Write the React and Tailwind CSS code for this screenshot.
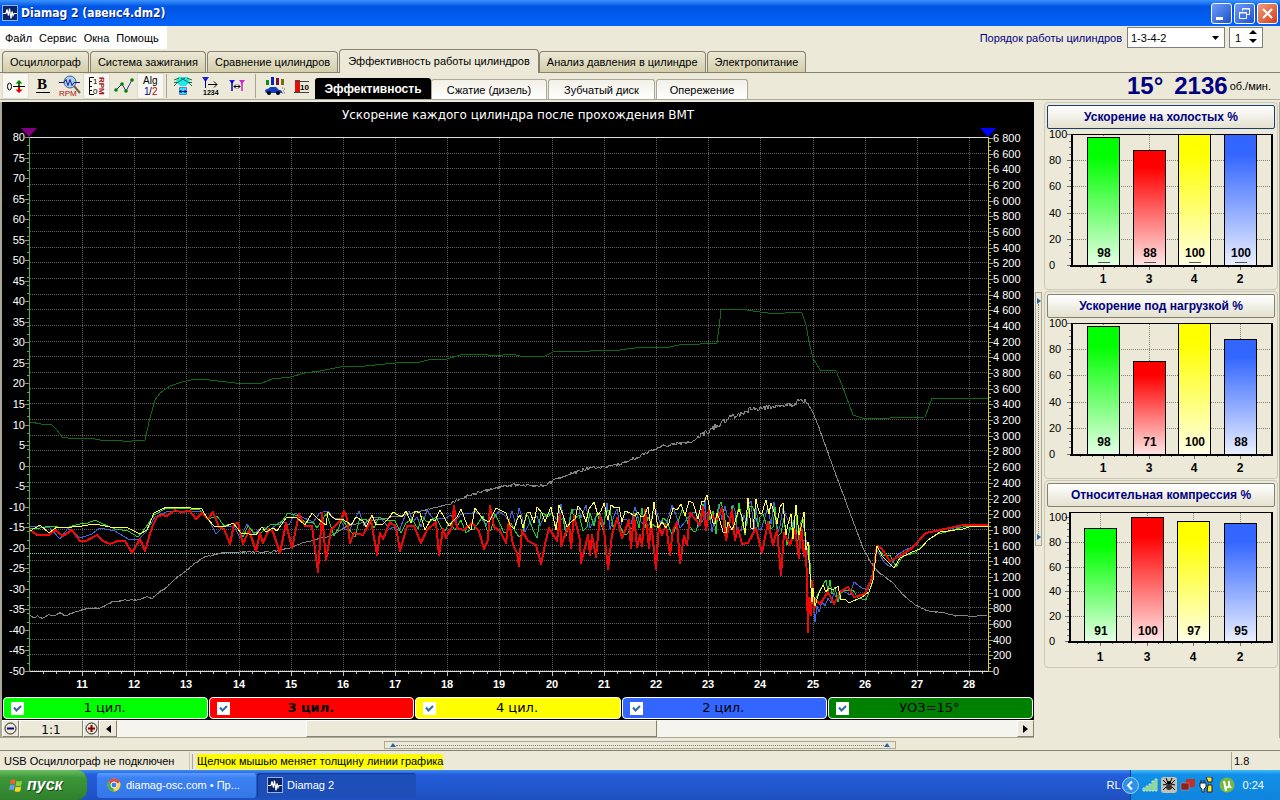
import { useState } from "react";

const TABS = [
  "Осциллограф",
  "Система зажигания",
  "Сравнение цилиндров",
  "Эффективность работы цилиндров",
  "Анализ давления в цилиндре",
  "Электропитание",
];

const SUB_TABS = [
  { label: "Эффективность", width: "w-[116px]" },
  { label: "Сжатие (дизель)", width: "w-[116px]" },
  { label: "Зубчатый диск", width: "w-[107px]" },
  { label: "Опережение", width: "w-[92px]" },
];

const SERIES = [
  { label: "1 цил.", color: "bg-[#00ff00]" },
  { label: "3 цил.", color: "bg-[#ff0000]", bold: true },
  { label: "4 цил.", color: "bg-[#ffff00]" },
  { label: "2 цил.", color: "bg-[#3366ff]" },
  { label: "УОЗ=15°", color: "bg-[#008000]" },
];

const PANELS = [
  { title: "Ускорение на холостых %", values: [98, 88, 100, 100], full: 5, bottom: 136, left: 26, underline: true },
  { title: "Ускорение под нагрузкой %", values: [98, 71, 100, 88], full: 5, bottom: 136, left: 26 },
  { title: "Относительная компрессия %", values: [91, 100, 97, 95], full: 10, bottom: 134, left: 24 },
];

const BAR_COLORS = ["#00ff00", "#ff0000", "#ffff00", "#3366ff"];
const BAR_NAMES = ["1", "3", "4", "2"];

// Chart coordinates: x 29..988 is the time axis, y 137..671 the value axis
const ADVANCE =
  "30,422 41,424 52,425 57,430 62,437 68,438 76,439 90,438 100,440 118,440 128,442 136,440 145,440 150,418 155,400 160,393 170,386 182,382 195,379 210,380 235,383 250,383 262,383 272,379 290,377 305,373 320,371 340,367 365,366 395,363 420,362 432,359 447,359 460,355 480,354 495,356 512,354 520,356 545,356 555,351 590,351 620,350 635,348 660,347 670,347 683,344 700,344 717,343 719,328 721,310 740,309 760,312 776,314 785,313 800,312 802,313 806,325 810,346 813,358 820,370 836,371 842,385 853,415 862,418 875,419 890,418 925,417 932,398 960,398 988,398";

const SPEED = [
  [30, 616], [34, 618], [37, 616], [43, 618], [48, 615], [55, 616], [60, 613], [66, 616], [75, 612],
  [84, 609], [100, 608], [112, 602], [125, 600], [138, 600], [147, 597], [152, 599], [158, 593],
  [167, 587], [175, 579], [187, 570], [195, 563], [205, 557], [222, 553], [240, 552], [270, 552],
  [280, 550], [290, 548], [305, 542], [330, 536], [350, 525], [375, 520], [400, 516], [425, 510],
  [453, 503], [462, 498], [480, 492], [500, 487], [512, 485], [545, 486], [555, 480], [570, 474],
  [590, 468], [605, 467], [620, 464], [640, 456], [660, 447], [692, 441], [710, 430], [730, 418],
  [750, 410], [770, 407], [785, 407], [800, 401], [807, 402], [812, 411], [818, 425], [827, 450],
  [833, 467], [843, 494], [853, 521], [863, 548], [870, 561], [877, 571], [893, 583], [903, 595],
  [915, 605], [928, 611], [945, 613], [955, 616], [965, 615], [972, 617], [980, 615], [988, 616],
];

const RED =
  "30,530 37,535 49,535 55,530 63,536 72,530 80,541 86,541 97,535 103,541 110,544 118,541 125,541 132,553 140,539 145,551 152,527 157,517 162,515 167,516 175,510 180,512 190,511 196,519 202,513 208,519 213,512 219,527 224,529 230,544 234,524 238,523 243,544 249,530 256,551 260,533 263,543 269,529 273,532 280,553 286,523 292,548 299,514 305,526 312,526 318,572 322,513 326,560 331,530 341,520 344,511 347,518 350,543 354,533 363,535 371,520 377,555 380,533 383,539 390,522 396,527 400,551 407,526 414,526 421,543 427,530 436,522 439,555 443,529 446,538 452,527 454,506 457,528 464,530 472,523 479,531 484,549 488,540 490,506 494,527 500,531 506,543 509,520 513,545 517,553 519,566 522,530 528,541 536,545 541,564 546,540 549,528 557,541 560,515 561,546 569,524 571,548 574,516 580,540 581,563 588,535 590,555 592,535 596,557 600,516 604,530 608,569 612,535 617,518 622,538 629,520 631,548 634,515 637,547 640,535 642,546 645,510 649,548 651,520 656,569 659,525 662,535 666,525 670,555 673,530 677,522 680,563 684,536 687,545 690,513 696,520 700,525 703,507 706,530 709,510 715,520 718,518 722,508 726,540 729,525 732,510 735,540 738,528 742,544 748,543 756,528 762,553 768,522 773,545 777,530 781,575 784,533 790,545 795,530 799,558 801,525 804,556 806,545 808,632 809,598 811,615 812,582 814,610 816,600 820,604 824,598 828,592 834,604 840,592 848,587 854,597 865,594 869,584 872,580 877,546 881,548 890,561 900,556 912,548 926,533 945,529 963,525 988,525";

const YELLOW_HEAD =
  "30,531 40,525 49,533 57,527 72,527 82,526 95,524 110,527 128,528 140,534 147,530 154,513 162,509 167,507 180,507 202,509 207,518 214,526 224,527 233,523 241,533 256,535 262,527 266,532 273,528 277,531 286,518 296,517 305,525 312,513 318,519 326,525";
const YELLOW_TAIL =
  "804,512 806,550 808,542 809,560 812,602 813,588 815,606 819,593 823,585 826,592 829,588 833,590 838,586 841,600 845,599 849,603 862,597 869,592 873,580 877,546 882,556 888,562 894,568 900,558 912,552 920,549 928,540 940,532 963,529 972,526 988,526";
const GREEN_HEAD =
  "30,529 40,528 50,526 65,528 80,524 88,523 95,520 103,524 115,529 128,531 138,537 146,527 154,515 165,509 180,508 200,510 208,519 217,516 224,526 234,523 243,537 248,526 254,533 262,532 270,525 280,524 288,513 298,516 305,522 313,522 317,528 326,514";
const GREEN_TAIL =
  "806,545 809,545 811,580 813,604 818,594 823,585 826,580 828,592 830,580 832,594 835,587 838,602 842,590 853,590 858,598 866,600 872,584 877,548 884,556 890,555 896,567 903,556 915,553 928,540 938,534 950,531 963,527 988,525";
const BLUE_HEAD =
  "30,526 50,528 60,539 68,528 80,538 92,534 100,528 115,531 128,539 138,540 145,533 155,517 168,511 182,511 200,511 210,522 216,534 224,526 234,526 240,538 247,524 254,534 262,527 270,530 281,521 289,525 295,513 302,517 313,522 320,513 326,511";
const BLUE_TAIL =
  "806,540 810,570 813,602 815,622 817,606 819,612 822,602 825,606 828,598 831,603 834,593 838,600 842,590 850,595 854,582 862,588 868,590 872,575 877,550 884,562 890,567 896,556 905,550 915,546 926,533 945,529 963,527 988,524";

function makeNoise(seed) {
  let s = seed;
  return () => {
    s = (s * 16807) % 2147483647;
    return s / 2147483647 - 0.5;
  };
}

// Middle part of a cylinder trace: it swings round a slowly moving level
function swing(seed, offset) {
  const noise = makeNoise(seed);
  const points = [];
  let x = 328;
  while (x < 804) {
    const rise = x < 720 ? ((x - 328) / 392) * 8 : 8 - ((x - 720) / 84) * 8;
    const amp = x < 500 ? 22 : x < 700 ? 29 : 38;
    points.push(`${Math.round(x)},${Math.round(523 + offset - rise + noise() * amp)}`);
    x += x < 500 ? 5 + noise() * 3 : x < 700 ? 3.6 + noise() * 2 : 2.6 + noise() * 1.5;
  }
  return points.join(" ");
}

function speedLine() {
  const noise = makeNoise(77);
  const points = [];
  for (let i = 0; i < SPEED.length - 1; i++) {
    const [x1, y1] = SPEED[i];
    const [x2, y2] = SPEED[i + 1];
    for (let x = x1; x < x2; x++) {
      const amp = x > 808 ? 0.8 : x > 700 ? 5 : x > 450 ? 3 : 1;
      const y = y1 + ((y2 - y1) * (x - x1)) / (x2 - x1) + noise() * amp;
      points.push(`${x},${y.toFixed(1)}`);
    }
  }
  return points.join(" ");
}

const SPEED_LINE = speedLine();
const GREEN = `${GREEN_HEAD} ${swing(4211, 5)} ${GREEN_TAIL}`;
const BLUE = `${BLUE_HEAD} ${swing(911, -1)} ${BLUE_TAIL}`;
const YELLOW = `${YELLOW_HEAD} ${swing(5003, -1)} ${YELLOW_TAIL}`;

function range(n) {
  return Array.from({ length: n }, (_, i) => i);
}

function AppIcon() {
  return (
    <svg width="16" height="16" viewBox="0 0 16 16" className="shrink-0">
      <rect x="0.5" y="0.5" width="15" height="15" fill="#0a246a" stroke="#8fb4f0" />
      <path d="M1 8.500h3M12 8.500h3" stroke="#fff" />
      <path d="M4 8.500l1-4 1.500 6 1-7 1.500 10 1-7 1 4 1-2" fill="none" stroke="#fff" strokeWidth="1.200" />
    </svg>
  );
}

function TitleBar() {
  return (
    <header className="flex h-[26px] items-center gap-[3px] bg-linear-to-b from-[#3a93ff] via-[#0054e3] via-25% to-[#0363fb] px-[2px]">
      <AppIcon />
      <h1 className="flex-1 font-['DejaVu_Sans_Condensed','DejaVu_Sans',sans-serif] text-[12px] font-bold text-white [text-shadow:1px_1px_#0a1f80]">
        Diamag 2 (авенс4.dm2)
      </h1>
      <div className="flex gap-[2px]">
        <button aria-label="Свернуть" className="h-[21px] w-[21px] rounded-[3px] border border-white bg-linear-to-br from-[#6f9cf5] to-[#1f4fd0]">
          <svg viewBox="0 0 19 19" className="block">
            <path d="M4 14.500h7" stroke="#fff" strokeWidth="3" />
          </svg>
        </button>
        <button aria-label="Восстановить" className="h-[21px] w-[21px] rounded-[3px] border border-white bg-linear-to-br from-[#6f9cf5] to-[#1f4fd0]">
          <svg viewBox="0 0 19 19" className="block" fill="none" stroke="#fff">
            <path d="M7.500 7V4.500h7v6H12M7 5h8" />
            <path d="M4.500 8.500h7v6h-7zM4 9h8" />
          </svg>
        </button>
        <button aria-label="Закрыть" className="h-[21px] w-[21px] rounded-[3px] border border-white bg-linear-to-br from-[#f09a7c] to-[#d03a10]">
          <svg viewBox="0 0 19 19" className="block">
            <path d="M5 5l9 9M14 5l-9 9" stroke="#fff" strokeWidth="2" />
          </svg>
        </button>
      </div>
    </header>
  );
}

function MenuRow() {
  const [order, setOrder] = useState("1-3-4-2");
  const [first, setFirst] = useState(1);
  return (
    <div className="flex h-[23px] items-start justify-between text-[11px]">
      <nav className="flex h-[23px] items-center gap-[7px] bg-white pr-[8px] pl-[5px]">
        {["Файл", "Сервис", "Окна", "Помощь"].map((item) => (
          <button key={item}>{item}</button>
        ))}
      </nav>
      <div className="flex items-center pt-px pr-[17px]">
        <label htmlFor="order" className="mr-[5px] text-[#000080]">
          Порядок работы цилиндров
        </label>
        <div className="relative mr-[4px]">
          <select
            id="order"
            value={order}
            onChange={(e) => setOrder(e.target.value)}
            className="block h-[21px] w-[98px] appearance-none border border-[#7f7f7f] bg-white pl-[3px]"
          >
            <option>1-3-4-2</option>
            <option>1-2-4-3</option>
          </select>
          <svg width="7" height="4" viewBox="0 0 7 4" className="pointer-events-none absolute top-[9px] right-[6px]">
            <path d="M0 0h7L3.500 4z" />
          </svg>
        </div>
        <div className="relative">
          <input
            aria-label="Первый цилиндр"
            value={first}
            onChange={(e) => setFirst(e.target.value)}
            className="block h-[21px] w-[34px] border border-[#7f7f7f] bg-white pl-[5px]"
          />
          <svg width="8" height="13" viewBox="0 0 8 13" className="pointer-events-none absolute top-[3px] right-[6px]">
            <path d="M0 4L4 0l4 4zM0 9l4 4 4-4z" />
          </svg>
        </div>
      </div>
    </div>
  );
}

function MainTabs() {
  const [active, setActive] = useState(3);
  return (
    <div role="tablist" className="flex h-[24px] items-end border-b border-[#85826f] pl-[2px] text-[11px]">
      {TABS.map((tab, i) => (
        <button
          key={tab}
          role="tab"
          aria-selected={i === active}
          onClick={() => setActive(i)}
          className={
            i === active
              ? "-mb-px h-[24px] rounded-t-[4px] border border-b-0 border-[#85826f] bg-[#ece9d8] px-[8px] pb-[2px]"
              : "mr-px h-[21px] rounded-t-[4px] border border-b-0 border-[#85826f] bg-linear-to-b from-[#ece9d8] to-[#d3cda9] px-[7px]"
          }
        >
          {tab}
        </button>
      ))}
    </div>
  );
}

const TOOL = "flex h-[26px] w-[27px] items-center justify-center";
const TOOL_ON = "flex h-[26px] w-[27px] items-center justify-center bg-[#f8f7f2] border border-[#e0ddcc]";

function Toolbar() {
  return (
    <div className="flex items-center">
      <button aria-label="Смещение нуля" className={TOOL_ON}>
        <svg width="20" height="20" viewBox="0 0 20 20">
          <ellipse cx="3.500" cy="10.500" rx="2" ry="3.500" fill="none" stroke="#000" />
          <path d="M7 10.500h12" stroke="#000" />
          <path d="M13 4l-3.500 3.500H12V10h2V7.500h2.500z" fill="#008000" />
          <path d="M13 17l-3.500-3.500H12V11h2v2.500h2.500z" fill="#e00000" />
        </svg>
      </button>
      <button aria-label="Жирная линия" className={TOOL}>
        <svg width="20" height="20" viewBox="0 0 20 20">
          <text x="4" y="13" fontFamily="Liberation Serif, serif" fontSize="15" fontWeight="bold">B</text>
          <path d="M3 16.500h14" stroke="#000" />
        </svg>
      </button>
      <button aria-label="Обороты" className={TOOL}>
        <svg width="24" height="22" viewBox="0 0 24 22">
          <circle cx="12" cy="7" r="6" fill="#a9cdf0" stroke="#506090" />
          <path d="M1 7.500h5l2-3 2 6 2-6 2 6 2-3h6" fill="none" stroke="#102080" />
          <path d="M16 11l6 7" stroke="#706040" strokeWidth="2" />
          <text x="1" y="21" fontFamily="Liberation Sans, sans-serif" fontSize="8" fill="#b01010">RPM</text>
        </svg>
      </button>
      <button aria-label="Шкала оборотов" className={TOOL_ON}>
        <svg width="20" height="20" viewBox="0 0 20 20">
          <path d="M7 1.500H2.500v17H7M2 5.500h3M2 10.500h3M2 14.500h3" fill="none" stroke="#000" />
          <text x="6" y="8" fontFamily="Liberation Sans, sans-serif" fontSize="8">1</text>
          <text x="6" y="18" fontFamily="Liberation Sans, sans-serif" fontSize="8">0</text>
          <text transform="translate(12 1) rotate(90)" fontFamily="Liberation Sans, sans-serif" fontSize="8" fontWeight="bold" fill="#a01010">RPM</text>
        </svg>
      </button>
      <button aria-label="Точки" className={TOOL}>
        <svg width="20" height="18" viewBox="0 0 20 18">
          <path d="M2 13l6-6 4 7 6-11" fill="none" stroke="#204090" />
          <g fill="#008000">
            <circle cx="2" cy="13" r="1.800" />
            <circle cx="8" cy="7" r="1.800" />
            <circle cx="12" cy="14" r="1.800" />
            <circle cx="18" cy="3" r="1.800" />
          </g>
        </svg>
      </button>
      <button aria-label="Алгоритм" className={TOOL_ON}>
        <svg width="20" height="22" viewBox="0 0 20 22" fontFamily="Liberation Sans, sans-serif">
          <text x="2" y="9" fontSize="10">Alg</text>
          <text x="3" y="20" fontSize="10" fill="#0000a0">1</text>
          <text x="8" y="20" fontSize="10">/</text>
          <text x="11" y="20" fontSize="10" fill="#d00000">2</text>
        </svg>
      </button>
      <span className="mx-[2px] h-[24px] w-px bg-[#a7a490]" />
      <button aria-label="Датчик" className={TOOL}>
        <svg width="20" height="20" viewBox="0 0 20 20">
          <path d="M6 1h8l3 4-4 5H7L3 5z" fill="#20e8f0" />
          <path d="M1 4l5-2M1 10c3-4 8-6 11-8M14 2l5 2M19 10C16 6 11 4 8 2M1 6.500h4M15 6.500h4" fill="none" stroke="#107030" />
          <path d="M6.500 11.500h7v7h-7z" fill="#30e0f0" stroke="#6080c0" />
          <path d="M6 15.500h8M8 14v3M12 14v3" stroke="#0000a0" />
        </svg>
      </button>
      <button aria-label="Маркер цилиндра" className={TOOL}>
        <svg width="20" height="20" viewBox="0 0 20 20">
          <path d="M2 1h7L5.500 6z" fill="#2020e0" />
          <path d="M5.500 3v9" stroke="#0000a0" />
          <path d="M8 8.500h9M14 5.500l3 3-3 3" fill="none" stroke="#000" />
          <text x="3" y="19" fontFamily="Liberation Sans, sans-serif" fontSize="7" fontWeight="bold">1234</text>
        </svg>
      </button>
      <button aria-label="Между маркерами" className={TOOL}>
        <svg width="20" height="20" viewBox="0 0 20 20">
          <path d="M2 4h6L5 8z" fill="#2020e0" />
          <path d="M5 5v10" stroke="#0000c0" strokeWidth="1.500" />
          <path d="M12 4h6l-3 4z" fill="#d020d0" />
          <path d="M15 5v10" stroke="#d020d0" strokeWidth="1.500" />
          <path d="M7 10.500h6M9 8.500l-2 2 2 2M11 8.500l2 2-2 2" fill="none" stroke="#000" />
        </svg>
      </button>
      <span className="mx-[5px] h-[24px] w-px bg-[#a7a490]" />
      <button aria-label="Разгон" className={TOOL}>
        <svg width="20" height="20" viewBox="0 0 20 20">
          <path d="M1 4h3v5H1z" fill="#109010" />
          <path d="M6 1h3v8H6z" fill="#1020c0" />
          <path d="M11 2h3v7h-3z" fill="#801030" />
          <path d="M16 3h3v6h-3z" fill="#707010" />
          <path d="M0 15c1-3 3-1 5-4h6l3 3c3 0 3 1 3 3H1z" fill="#1040c0" />
          <circle cx="4" cy="17" r="2" />
          <circle cx="13" cy="17" r="2" />
          <path d="M17 12h1M19 13h1M18 15h1M17 17h1M19 17h1" stroke="#606060" />
        </svg>
      </button>
      <button aria-label="Порог" className={TOOL}>
        <svg width="18" height="20" viewBox="0 0 18 20">
          <path d="M2 4h5v12H2z" fill="#e01010" />
          <path d="M2 5.500h14M1 16.500h15" stroke="#404040" />
          <text x="7" y="14" fontFamily="Liberation Sans, sans-serif" fontSize="8" fontWeight="bold">10</text>
        </svg>
      </button>
    </div>
  );
}

function SubTabs() {
  const [active, setActive] = useState(0);
  return (
    <div role="tablist" className="flex flex-1 items-end text-[11px]">
      {SUB_TABS.map((tab, i) => (
        <button
          key={tab.label}
          role="tab"
          aria-selected={i === active}
          onClick={() => setActive(i)}
          className={subTabClass(tab.width, i === active)}
        >
          {tab.label}
        </button>
      ))}
    </div>
  );
}

function subTabClass(width, active) {
  return active
    ? `${width} h-[21px] rounded-t-[3px] bg-black text-[12px] font-bold text-white`
    : `${width} mr-px h-[20px] rounded-t-[3px] border border-b-0 border-[#aca899] bg-linear-to-b from-[#f2f0e6] to-white`;
}

function MainChart() {
  return (
    <svg viewBox="2 102 1032 594" className="block w-full bg-black" fontFamily="Liberation Sans, sans-serif" fontSize="11">
      <text x="518" y="119" textAnchor="middle" fill="#fff" fontFamily="DejaVu Sans, sans-serif" fontSize="12">
        Ускорение каждого цилиндра после прохождения ВМТ
      </text>
      <g stroke="#606060" strokeDasharray="1 1" shapeRendering="crispEdges">
        {range(34).map((i) => {
          const y = Math.round(671 - i * 15.68) - 0.5;
          return <path key={i} d={`M30 ${y}H988`} />;
        })}
        {range(18).map((i) => {
          const x = Math.round(82 + i * 52.18) + 0.5;
          return <path key={i} d={`M${x} 138V671`} />;
        })}
      </g>
      <path d="M30 553.5H988" stroke="#7fd8c8" strokeDasharray="1 1" shapeRendering="crispEdges" />

      {/* Axes */}
      <g shapeRendering="crispEdges">
        <path d="M29 137.500H989M29 671.500H989" stroke="#e0e0e0" />
        <path d="M29.500 137V672" stroke="#4caf50" />
        <path d="M988.500 137V672" stroke="#d8d040" />
        {range(66).map((i) => {
          const y = Math.round(671 - i * 8.216) + 0.5;
          return <path key={i} d={`M27 ${y}H29`} stroke="#4caf50" />;
        })}
        {range(27).map((i) => {
          const y = Math.round(671 - i * 20.54) + 0.5;
          return <path key={i} d={`M25 ${y}H29`} stroke="#909090" />;
        })}
        {range(137).map((i) => {
          const y = Math.round(671 - i * 3.92) + 0.5;
          return <path key={i} d={`M989 ${y}H${i % 4 ? 991 : 993}`} stroke="#b8b040" />;
        })}
        {range(73).map((i) => {
          const x = Math.round(43 + i * 13.045) + 0.5;
          return x < 988 && <path key={i} d={`M${x} 672V${i % 4 === 3 ? 676 : 674}`} stroke="#c0c0c0" />;
        })}
      </g>
      <path d="M21 128h16l-8 9z" fill="#800080" />
      <path d="M980 128h16l-8 9z" fill="#0000ff" />
      <g fill="#fff" textAnchor="end">
        {range(27).map((i) => (
          <text key={i} x="25" y={Math.round(675 - i * 20.54)}>{i * 5 - 50}</text>
        ))}
      </g>
      <g fill="#fff">
        {range(35).map((i) => {
          const v = i * 200;
          const label = v < 1000 ? `${v}` : `${Math.floor(v / 1000)} ${String(v % 1000).padStart(3, "0")}`;
          return <text key={i} x="993" y={Math.round(675 - i * 15.68)}>{label}</text>;
        })}
      </g>
      <g fill="#fff" textAnchor="middle" fontWeight="bold">
        {range(18).map((i) => (
          <text key={i} x={Math.round(82 + i * 52.18)} y="688">{i + 11}</text>
        ))}
      </g>

      {/* Traces */}
      <g fill="none" strokeLinejoin="round" shapeRendering="crispEdges">
        <polyline points={ADVANCE} stroke="#0c6c14" />
        <polyline points={SPEED_LINE} stroke="#858585" />
        <polyline points={BLUE} stroke="#3f66e0" />
        <polyline points={GREEN} stroke="#20d820" />
        <polyline points={RED} stroke="#f00808" strokeWidth="2" />
        <polyline points={YELLOW} stroke="#ffff40" />
      </g>
    </svg>
  );
}

function Legend() {
  const [shown, setShown] = useState(SERIES.map(() => true));
  const toggle = (index) => setShown((prev) => prev.map((v, i) => (i === index ? !v : v)));
  return (
    <div className="flex h-[24px] gap-px bg-black pt-px pr-px pb-px pl-px">
      {SERIES.map((s, i) => (
        <label
          key={s.label}
          className={`${s.color} ${s.bold ? "font-bold" : ""} flex flex-1 items-center rounded-[4px] border border-white pr-[22px] pl-[7px] font-['DejaVu_Sans',sans-serif] text-[13px]`}
        >
          <span className="relative flex h-[13px] w-[13px]">
            <input
              type="checkbox"
              checked={shown[i]}
              onChange={() => toggle(i)}
              className="h-[13px] w-[13px] appearance-none bg-white"
            />
            {shown[i] && (
              <svg viewBox="0 0 13 13" className="pointer-events-none absolute inset-0">
                <path d="M3 5.500L5.500 8.500L10 4" fill="none" stroke="#3068a8" strokeWidth="2" />
              </svg>
            )}
          </span>
          <span className="flex-1 text-center">{s.label}</span>
        </label>
      ))}
    </div>
  );
}

function ZoomIcon({ plus }) {
  const color = plus ? "#800000" : "#000080";
  return (
    <svg width="13" height="13" viewBox="0 0 13 13" fill="none">
      <circle cx="6.500" cy="6.500" r="5.500" stroke="#202020" />
      <path d={plus ? "M3 6.500h7M6.500 3v7" : "M3 6.500h7"} stroke={color} strokeWidth="2" />
    </svg>
  );
}

const RAISED = "border border-t-white border-l-white border-r-[#85826f] border-b-[#85826f] bg-[#ece9d8]";

function ScrollRow() {
  return (
    <div className="flex h-[18px] border-b border-[#aca899]">
      <button aria-label="Уменьшить" className={`${RAISED} flex w-[17px] items-center justify-center`}>
        <ZoomIcon />
      </button>
      <div className={`${RAISED} w-[64px] text-center font-['DejaVu_Sans',sans-serif] text-[12px] leading-[18px]`}>1:1</div>
      <button aria-label="Увеличить" className={`${RAISED} flex w-[16px] items-center justify-center`}>
        <ZoomIcon plus />
      </button>
      <button aria-label="Влево" className={`${RAISED} flex w-[18px] items-center justify-center`}>
        <svg width="5" height="8" viewBox="0 0 5 8">
          <path d="M5 0v8L0 4z" />
        </svg>
      </button>
      <div className="flex flex-1 bg-[#f5f4ee]">
        <div className="w-[21%]" />
        <div className={`${RAISED} w-[39%]`} />
      </div>
      <button aria-label="Вправо" className={`${RAISED} flex w-[17px] items-center justify-center`}>
        <svg width="5" height="8" viewBox="0 0 5 8">
          <path d="M0 0v8l5-4z" />
        </svg>
      </button>
    </div>
  );
}

function BarPanel({ panel, id }) {
  const { title, values, full, bottom, left, underline } = panel;
  const scale = (bottom - full) / 100;
  const pitch = left === 26 ? 45.6 : 46.6;
  const center = (i) => Math.round((left === 26 ? 58 : 55) + i * pitch);
  return (
    <section className="rounded-[4px] border border-[#cbc8b8] px-[2px] pt-[2px]">
      <button
        className={`${id === 0 ? "border-[#1c3f6e]" : "border-[#85826f]"} block h-[24px] w-full rounded-[2px] border bg-linear-to-b from-white to-[#e4e1cf] text-[12px] font-bold text-[#000080]`}
      >
        {title}
      </button>
      <svg viewBox="2 0 228 160" className="block w-full" fontFamily="Liberation Sans, sans-serif" fontSize="11">
        <defs>
          {BAR_COLORS.map((color, i) => (
            <linearGradient key={color} id={`bar-${id}-${i}`} x1="0" y1="0" x2="0" y2="1">
              <stop offset="0.15" stopColor={color} />
              <stop offset="1" stopColor={color} stopOpacity="0.1" />
            </linearGradient>
          ))}
        </defs>
        <g shapeRendering="crispEdges">
          {range(5).map((i) => (
            <path key={i} d={`M${left} ${Math.round(bottom - i * 20 * scale) + 0.5}H227`} stroke="#85826f" strokeDasharray="1 1" />
          ))}
          {range(21).map((i) => (
            <path key={i} d={`M${left - (i % 4 ? 2 : 4)} ${Math.round(bottom - i * 5 * scale) + 0.5}H${left}`} stroke="#707070" />
          ))}
          {range(17).map((i) => {
            const x = Math.round(center(0) - pitch / 2 + (i * pitch) / 4) + 0.5;
            return x < 226 && <path key={i} d={`M${x} ${bottom + 1}v${i % 4 === 2 ? 4 : 2}`} stroke="#707070" />;
          })}
          <path d={`M${left} 5.500H227`} stroke="#000" />
          <path d={`M${left + 0.5} 5V${bottom + 1}M227 5V${bottom + 1}`} stroke="#000" strokeWidth="2" />
          {values.map((v, i) => {
            const top = Math.round(bottom - v * scale);
            return (
              <g key={i}>
                <path d={`M${center(i) + 0.5} 6V${top}`} stroke="#85826f" strokeDasharray="1 1" />
                <rect x={center(i) - 16} y={top} width="33" height={bottom - top} fill="#fff" />
                <rect x={center(i) - 15.5} y={top + 0.5} width="32" height={bottom - top} fill={`url(#bar-${id}-${i})`} stroke="#000" />
                {underline && <path d={`M${center(i) - 5} 133.500h12`} stroke="#555" />}
              </g>
            );
          })}
          <path d={`M${left - 1} ${bottom + 0.5}H228`} stroke="#000" strokeWidth="2" />
        </g>
        {range(6).map((i) => (
          <text key={i} x="4" y={Math.round(bottom + 4 - i * 20 * scale)}>{i * 20}</text>
        ))}
        <g textAnchor="middle" fontWeight="bold" fontSize="12">
          {values.map((v, i) => (
            <text key={i} x={center(i) + 1} y="128">{v}</text>
          ))}
          {BAR_NAMES.map((name, i) => (
            <text key={name} x={center(i)} y="154">{name}</text>
          ))}
        </g>
      </svg>
    </section>
  );
}

function StatusBar() {
  return (
    <footer className="flex h-[20px] items-center border-t border-[#85826f] bg-[#ece9d8] pt-px text-[11px]">
      <div className="h-full w-[190px] border-r border-[#cbc8b8] pl-[4px] leading-[19px]">USB Осциллограф не подключен</div>
      <div className="ml-[2px] flex-1 border-l border-[#aca899] pl-[4px]">
        <span className="inline-block bg-[#ffff00] leading-[15px]">Щелчок мышью меняет толщину линии графика</span>
      </div>
      <div className="h-full w-[49px] border-l border-[#aca899] pl-[2px] leading-[19px]">1.8</div>
    </footer>
  );
}

function TaskBar() {
  return (
    <div className="flex h-[30px] items-stretch bg-linear-to-b from-[#3f8cf3] via-[#245edb] via-15% to-[#1f50c0] text-[11px] text-white">
      <button className="mr-[10px] flex w-[87px] items-center gap-[3px] rounded-r-[10px] bg-linear-to-b from-[#6cbf63] via-[#3c9838] via-25% to-[#2f7f2c] pl-[9px] text-[16px] font-bold italic [text-shadow:1px_1px_#1a4a18]">
        <svg width="15" height="15" viewBox="0 0 16 16">
          <path d="M2 2c2-1 3-1 5 0L6 7C4 6 3 6 1 7z" fill="#f06030" />
          <path d="M8 3c2 1 3 1 6 0l-1 5c-2 1-4 1-6 0z" fill="#8cd040" />
          <path d="M1 8c2-1 3-1 5 0l-1 5c-2-1-3-1-5 0z" fill="#60a0f0" />
          <path d="M7 9c2 1 3 1 6 0l-1 5c-2 1-4 1-6 0z" fill="#ffd030" />
        </svg>
        пуск
      </button>
      <div className="flex flex-1 items-center gap-px">
        <button className="flex h-[25px] w-[159px] items-center gap-[5px] rounded-[3px] bg-linear-to-b from-[#5a9bff] via-[#3c81f3] via-20% to-[#3376e8] pl-[10px]">
          <svg width="14" height="14" viewBox="0 0 14 14">
            <circle cx="7" cy="7" r="6.500" fill="#ffd23f" />
            <path d="M7 7L1.300 3.700A6.500 6.500 0 0 1 12.800 4z" fill="#e24a3b" />
            <path d="M7 7L1.300 3.700A6.500 6.500 0 0 0 6.500 13.500z" fill="#4cae50" />
            <circle cx="7" cy="7" r="3" fill="#3f7fe8" stroke="#fff" />
          </svg>
          diamag-osc.com • Пр...
        </button>
        <button className="flex h-[25px] w-[159px] items-center gap-[4px] rounded-[3px] bg-[#1e4fb8] pl-[10px] shadow-[inset_1px_1px_1px_#143a90]">
          <AppIcon />
          Diamag 2
        </button>
      </div>
      <span className="self-center pr-[9px]">RL</span>
      <div className="flex items-center gap-[3px] border-l border-[#0d3fa0] bg-linear-to-b from-[#3fbcf8] via-[#1290e8] via-15% to-[#0f84dc] pr-[16px]">
        <button aria-label="Скрытые значки" className="-ml-[9px]">
          <svg width="17" height="17" viewBox="0 0 17 17">
            <circle cx="8.500" cy="8.500" r="8" fill="#2f90e8" stroke="#9cd0ff" />
            <path d="M10 4.500l-4 4 4 4" fill="none" stroke="#fff" strokeWidth="2" />
          </svg>
        </button>
        <svg width="16" height="14" viewBox="0 0 16 14">
          <g fill="#60c850" stroke="#e8ffe0" strokeWidth="0.700">
            <path d="M1 10h2v3H1zM4 8h2v5H4zM7 6h2v7H7zM10 3h2v10h-2zM13 1h2v12h-2z" />
          </g>
        </svg>
        <svg width="16" height="16" viewBox="0 0 16 16">
          <rect width="16" height="16" rx="3" fill="#c4c0b4" />
          <path d="M2 3l4 4-4 1M14 3l-4 4 4 1M2 13l4-4M14 13l-4-4M5 1l2 5M11 1L9 6" stroke="#000" fill="none" />
          <circle cx="8" cy="6" r="2" />
          <circle cx="8" cy="10" r="3" fill="#333" />
        </svg>
        <svg width="16" height="16" viewBox="0 0 16 16">
          <path d="M6 2h9v8H6z" fill="#c03020" />
          <path d="M1 6h8v7H1z" fill="#902020" stroke="#d0a090" strokeWidth="0.500" />
        </svg>
        <svg width="14" height="16" viewBox="0 0 14 16">
          <path d="M7 0h6v5H9zM9 8h4v7H8z" fill="#ffe820" stroke="#222" />
          <path d="M2 3v3M5 3v3M1 6h6v4L5 12v3H3v-3L1 10z" fill="#fff" stroke="#222" />
        </svg>
        <svg width="16" height="16" viewBox="0 0 16 16" className="ml-[3px]">
          <circle cx="8" cy="8" r="7.500" fill="#78b840" />
          <path d="M5 4l1 5c1 2 4 2 4-1V4M10 8l2 3M6 9l1 5" fill="none" stroke="#fff" strokeWidth="2" />
        </svg>
        <time className="ml-[5px]">0:24</time>
      </div>
    </div>
  );
}

export default function App() {
  return (
    <div className="flex min-h-screen flex-col bg-[#ece9d8] font-['Liberation_Sans',Arial,sans-serif] text-[12px] leading-[14px] text-black">
      <TitleBar />
      <MenuRow />
      <MainTabs />
      <div className="flex h-[27px] items-stretch border-b border-[#aca899] pl-[2px]">
        <Toolbar />
        <SubTabs />
        <div className="flex items-center pr-[9px]">
          <span className="text-[24px] leading-[26px] font-bold text-[#000080]">15°</span>
          <span className="ml-[11px] text-[24px] leading-[26px] font-bold text-[#000080]">2136</span>
          <span className="ml-[2px] text-[11px]">об./мин.</span>
        </div>
      </div>

      <main className="flex flex-1 pt-[2px]">
        <div className="min-w-0 flex-1 border-l-2 border-[#aca899]">
          <MainChart />
          <Legend />
          <ScrollRow />
        </div>
        <div className="flex w-[10px] flex-col pt-[190px] pl-px">
          <div className="flex h-[254px] w-[7px] flex-col items-center justify-between border border-[#aca899] py-[5px]">
            <svg width="4" height="6" viewBox="0 0 4 6">
              <path d="M0 0v6l4-3z" fill="#3060a0" />
            </svg>
            <span className="flex-1 border-l border-dotted border-[#85826f]" />
            <svg width="4" height="6" viewBox="0 0 4 6">
              <path d="M0 0v6l4-3z" fill="#3060a0" />
            </svg>
          </div>
        </div>
        <aside className="flex w-[234px] flex-col gap-px">
          {PANELS.map((panel, i) => (
            <BarPanel key={panel.title} panel={panel} id={i} />
          ))}
        </aside>
        <div className="w-[2px] border-r border-[#aca899]" />
      </main>

      <div className="flex h-[12px] items-start justify-center pt-[3px]">
        <div className="flex h-[8px] w-[40%] items-center border border-[#aca899] px-[5px]">
          <svg width="6" height="4" viewBox="0 0 6 4">
            <path d="M0 4h6L3 0z" fill="#3060a0" />
          </svg>
          <span className="flex-1 border-t border-dotted border-[#85826f]" />
          <svg width="6" height="4" viewBox="0 0 6 4">
            <path d="M0 4h6L3 0z" fill="#3060a0" />
          </svg>
        </div>
      </div>
      <StatusBar />
      <TaskBar />
    </div>
  );
}
